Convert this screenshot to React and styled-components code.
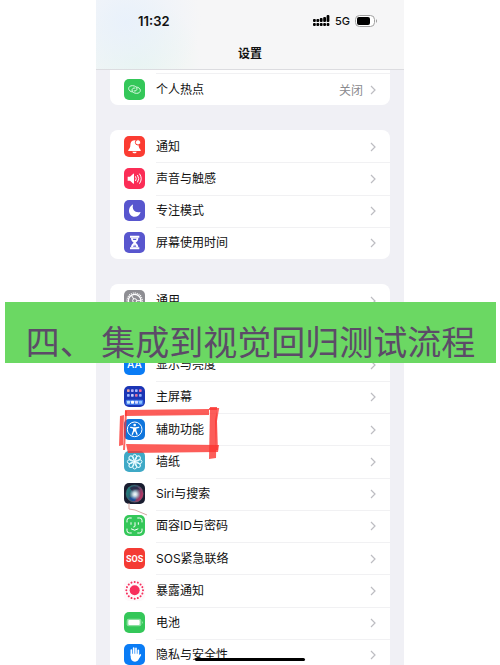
import styled, { createGlobalStyle } from "styled-components";

const GlobalStyle = createGlobalStyle`
  * {
    box-sizing: border-box;
  }

  body {
    margin: 0;
    background: #ffffff;
    color: #111111;
    font-family: Inter, "Noto Sans CJK SC", sans-serif;
  }
`;

const Page = styled.div`
  position: relative;
  height: 100vh;
  padding: 0 96px;
  overflow: hidden;
`;

const Phone = styled.div`
  display: flex;
  flex-direction: column;
  background: #f0f0f5;
`;

const Header = styled.header`
  height: 70px;
  border-bottom: 1px solid #dcdce0;
  background:
    radial-gradient(circle at 30px 22px, #e9f1fb 0, rgba(233, 241, 251, 0) 75px),
    radial-gradient(circle at 40px 62px, #e8f6ee 0, rgba(232, 246, 238, 0) 65px),
    #f6f6f7;
`;

const StatusBar = styled.div`
  display: flex;
  align-items: center;
  height: 42px;
  padding: 0 26px 0 42px;
`;

const Clock = styled.time`
  margin-right: auto;
  font-size: 13px;
  font-weight: 600;
`;

const Network = styled.span`
  margin: 0 5px;
  font-size: 11px;
  font-weight: 500;
`;

const Title = styled.h1`
  margin: 0;
  font-size: 12px;
  font-weight: 700;
  line-height: 24px;
  text-align: center;
`;

const Content = styled.main`
  display: flex;
  flex-direction: column;
  gap: 25px;
  padding: 0 14px;
`;

const Group = styled.ul`
  display: grid;
  grid-auto-rows: 1fr;
  min-height: ${({ $height }) => $height}px;
  margin: 0;
  padding: ${({ $continued }) => ($continued ? "3px 0 0" : "0")};
  border-radius: ${({ $continued }) => ($continued ? "0 0 8px 8px" : "8px")};
  background: #ffffff;
  list-style: none;
`;

const Item = styled.li`
  position: relative;
  display: flex;
`;

const RowButton = styled.button`
  display: flex;
  align-items: center;
  gap: 11px;
  width: 100%;
  padding: 0 0 0 14px;
  border: 0;
  background: none;
  color: inherit;
  font: inherit;
  font-size: 12px;
  text-align: left;
`;

const RowBody = styled.span`
  display: flex;
  flex: 1;
  align-items: center;
  gap: 7px;
  align-self: stretch;
  padding-right: 14px;
  border-top: 1px solid ${({ $divided }) => ($divided ? "#f1f1f3" : "transparent")};
`;

const Label = styled.span`
  flex: 1;
  line-height: 18px;
  white-space: nowrap;
`;

const Value = styled.span`
  color: #8a8a8e;
`;

const IconSvg = styled.svg`
  flex: none;
  width: 21px;
  height: 21px;
  border-radius: 5px;
  background: ${({ $color }) => $color};
`;

const Marker = styled.svg`
  position: absolute;
  z-index: 1;
  top: -7px;
  left: 8px;
  width: 104px;
  height: 54px;
  pointer-events: none;
`;

const Scribble = styled.svg`
  position: absolute;
  z-index: 1;
  top: 24px;
  left: 17px;
  width: 21px;
  height: 14px;
  pointer-events: none;
`;

const Banner = styled.div`
  position: absolute;
  z-index: 2;
  top: 302px;
  right: 4px;
  left: 5px;
  padding: 19px 0 2px;
  background: #6bd863;
  color: #5c4b68;
  font-family: "Noto Sans CJK SC", sans-serif;
  font-size: 34px;
  line-height: 40px;
  text-align: center;
  white-space: nowrap;
`;

const HomeIndicator = styled.div`
  position: absolute;
  z-index: 2;
  bottom: 4px;
  left: 50%;
  width: 110px;
  height: 3px;
  margin-left: -55px;
  border-radius: 2px;
  background: #000000;
`;

const around = (count) =>
  Array.from({ length: count }, (_, i) => (i * 360) / count);

const ICONS = {
  hotspot: {
    color: "#34c759",
    art: (
      <g fill="none" stroke="#d9f8e1" strokeWidth="3" strokeLinecap="round">
        <path d="M25 39c-6-1-11-5-11-10 0-6 5-9 11-9 8 0 14 4 14 10 0 4-4 7-9 6" />
        <path d="M38 24c6 1 11 5 11 10 0 6-5 9-11 9-8 0-14-4-14-10 0-4 4-7 9-6" />
      </g>
    ),
  },
  bell: {
    color: "#fb3c32",
    art: (
      <>
        <path
          fill="#fff"
          d="M31 13c-9 1-12 7-12 15 0 8-3 10-6 14-1 2 0 3 2 3h33c2 0 3-1 2-3-3-4-6-6-6-14 0-8-3-14-13-15zM25 47h13c-1 4-3 5-6 5s-6-1-7-5z"
        />
        <circle cx="42" cy="19" r="8" fill="#fff" stroke="#fb3c32" strokeWidth="3" />
      </>
    ),
  },
  sound: {
    color: "#fb2d56",
    art: (
      <>
        <path fill="#fff" d="M11 26h7l10-9c1-1 2 0 2 1v28c0 1-1 2-2 1l-10-9h-7z" />
        <path
          fill="none"
          stroke="#fff"
          strokeWidth="3"
          strokeLinecap="round"
          d="M35 26q4 6 0 12M41 22q7 10 0 20M47 18q10 14 0 28"
        />
      </>
    ),
  },
  moon: {
    color: "#5856ce",
    art: (
      <path
        fill="#fff"
        d="M25 14c1-1 2 0 2 1-4 14 7 24 21 21 1 0 2 0 1 2-3 8-9 12-17 12-10 0-17-8-17-18 0-8 4-14 10-18z"
      />
    ),
  },
  hourglass: {
    color: "#5856ce",
    art: (
      <>
        <path fill="#fff" d="M18 11h28v6H18zM18 46h28v6H18z" />
        <path
          fill="#fff"
          d="M21 17h22c0 8-3 11-8 15 5 4 8 7 8 14H21c0-7 3-10 8-14-5-4-8-7-8-15z"
        />
        <path fill="#5856ce" d="M26 20h12l-2 4h-8zM32 36l5 8H27z" />
        <path stroke="#fff" strokeWidth="3" d="M32 30v11" />
      </>
    ),
  },
  gear: {
    color: "#8e8e93",
    art: (
      <g fill="none" stroke="#fff">
        <circle cx="32" cy="32" r="19" strokeWidth="4" />
        <circle cx="32" cy="32" r="23" strokeWidth="4" strokeDasharray="3 3" />
        <circle cx="32" cy="32" r="6" strokeWidth="3" />
        <path strokeWidth="3" d="M38 32h13M29 27l-7-12M29 37l-7 12" />
      </g>
    ),
  },
  control: {
    color: "#8e8e93",
    art: (
      <g fill="none" stroke="#fff" strokeWidth="4">
        <rect x="13" y="14" width="37" height="15" rx="7" />
        <rect x="13" y="35" width="37" height="15" rx="7" />
      </g>
    ),
  },
  display: {
    color: "#0a7cf5",
    art: (
      <text
        x="31"
        y="43"
        fill="#fff"
        fontSize="31"
        fontWeight="500"
        textAnchor="middle"
      >
        AA
      </text>
    ),
  },
  home: {
    color: "#1b35b5",
    art: (
      <>
        {["#e8a0a0", "#b3aef2", "#a8b7ff", "#f06c9c"].map((fill, i) => (
          <rect key={fill} x={9 + i * 12} y="10" width="8" height="8" rx="2" fill={fill} />
        ))}
        {["#9db8ff", "#c4ccff", "#e0719c", "#93b4ff"].map((fill, i) => (
          <rect key={fill} x={9 + i * 12} y="24" width="8" height="8" rx="2" fill={fill} />
        ))}
        <rect x="5" y="41" width="53" height="16" rx="4" fill="#3f76e8" />
        {["#bfe3ff", "#ffffff", "#d5d8ff", "#8ec5ff"].map((fill, i) => (
          <rect key={fill} x={9 + i * 12} y="44" width="9" height="9" rx="2" fill={fill} />
        ))}
      </>
    ),
  },
  accessibility: {
    color: "#0f75dc",
    art: (
      <>
        <circle cx="32" cy="31" r="22" fill="none" stroke="#fff" strokeWidth="3" />
        <circle cx="32" cy="18" r="4" fill="#fff" />
        <path
          fill="none"
          stroke="#fff"
          strokeWidth="4"
          strokeLinecap="round"
          strokeLinejoin="round"
          d="M20 25l9 2v8l-4 11M44 25l-9 2v8l4 11M29 27h6M32 27v9"
        />
      </>
    ),
  },
  wallpaper: {
    color: "#3fa9c6",
    art: (
      <g fill="none" stroke="#e6faff" strokeWidth="3">
        {around(8).map((angle) => (
          <ellipse
            key={angle}
            cx="32"
            cy="18"
            rx="6"
            ry="8"
            transform={`rotate(${angle} 32 32)`}
          />
        ))}
        <circle cx="32" cy="32" r="4" fill="#fff" />
      </g>
    ),
  },
  siri: {
    color: "#191d30",
    art: (
      <>
        <defs>
          <radialGradient id="siriGlow" cx="0.5" cy="0.5" r="0.5">
            <stop offset="0" stopColor="#ffffff" />
            <stop offset="0.35" stopColor="#d3e4ec" stopOpacity="0.9" />
            <stop offset="1" stopColor="#a9cbd8" stopOpacity="0" />
          </radialGradient>
          <linearGradient id="siriOrb" x1="0" y1="0.2" x2="1" y2="0.6">
            <stop offset="0" stopColor="#17897f" />
            <stop offset="0.5" stopColor="#3b5470" />
            <stop offset="1" stopColor="#c92f62" />
          </linearGradient>
        </defs>
        <circle cx="32" cy="32" r="26" fill="url(#siriOrb)" />
        <path fill="#2b2644" fillOpacity="0.8" d="M17 15q17-12 32 5-16-5-23 6z" />
        <path fill="#1d4f9a" d="M14 44q14 0 19-11 5 14 0 21-12 1-19-10z" />
        <circle cx="33" cy="34" r="17" fill="url(#siriGlow)" />
        <circle cx="32" cy="32" r="26" fill="none" stroke="#5f8a8c" strokeWidth="1" />
      </>
    ),
  },
  face: {
    color: "#34c759",
    art: (
      <g fill="none" stroke="#fff" strokeWidth="3" strokeLinecap="round">
        <path d="M9 21v-5q0-7 7-7h6M41 9h6q7 0 7 7v5M54 42v5q0 7-7 7h-6M22 54h-6q-7 0-7-7v-5" />
        <path d="M21 23v5M43 23v5M33 23v10q0 3-4 3M22 42q10 8 20 0" />
      </g>
    ),
  },
  sos: {
    color: "#f43b34",
    art: (
      <text
        x="32"
        y="41"
        fill="#fff"
        fontFamily="Roboto, sans-serif"
        fontSize="27"
        fontWeight="700"
        textAnchor="middle"
      >
        SOS
      </text>
    ),
  },
  exposure: {
    color: "#fdf9fb",
    art: (
      <g fill="#f72f5d">
        <circle cx="32" cy="31" r="15" />
        {around(16).map((angle) => (
          <circle
            key={angle}
            cx="32"
            cy="6"
            r="3"
            transform={`rotate(${angle} 32 31)`}
          />
        ))}
      </g>
    ),
  },
  battery: {
    color: "#34c759",
    art: (
      <>
        <rect x="8" y="20" width="44" height="23" rx="6" fill="#8be0a0" />
        <rect x="13" y="24" width="34" height="15" rx="3" fill="#fff" />
        <path fill="#a5e8b5" d="M54 27q5 4 0 9z" />
      </>
    ),
  },
  privacy: {
    color: "#0a7cf5",
    art: (
      <>
        <path
          fill="none"
          stroke="#fff"
          strokeWidth="5"
          strokeLinecap="round"
          d="M22 34V18M29 32V12M36 32V13M43 34V19M43 42l6-9"
        />
        <path fill="#fff" d="M20 29h25l1 10c-1 9-6 14-13 14-9 0-13-6-13-14z" />
      </>
    ),
  },
};

const SECTIONS = [
  {
    height: 35,
    continued: true,
    rows: [{ icon: "hotspot", label: "个人热点", value: "关闭" }],
  },
  {
    height: 129,
    rows: [
      { icon: "bell", label: "通知" },
      { icon: "sound", label: "声音与触感" },
      { icon: "moon", label: "专注模式" },
      { icon: "hourglass", label: "屏幕使用时间" },
    ],
  },
  {
    height: 387,
    rows: [
      { icon: "gear", label: "通用" },
      // fully covered by the banner, so it carries no label
      { icon: "control", label: "" },
      { icon: "display", label: "显示与亮度" },
      { icon: "home", label: "主屏幕" },
      { icon: "accessibility", label: "辅助功能", marked: true },
      { icon: "wallpaper", label: "墙纸" },
      { icon: "siri", label: "Siri与搜索", scribbled: true },
      { icon: "face", label: "面容ID与密码" },
      { icon: "sos", label: "SOS紧急联络" },
      { icon: "exposure", label: "暴露通知" },
      { icon: "battery", label: "电池" },
      { icon: "privacy", label: "隐私与安全性" },
    ],
  },
];

const AppIcon = ({ name }) => (
  <IconSvg viewBox="0 0 63 63" $color={ICONS[name].color} aria-hidden="true">
    {ICONS[name].art}
  </IconSvg>
);

const Chevron = () => (
  <svg width="6" height="10" viewBox="0 0 6 10" aria-hidden="true">
    <path d="M1 1l4 4-4 4" fill="none" stroke="#bdbdc2" strokeWidth="1.2" />
  </svg>
);

// two SIMs: bars on top, dots below
const Signal = () => (
  <svg width="17" height="12" viewBox="0 0 17 12" aria-hidden="true">
    {[4, 4, 3, 2, 0].map((top, i) => (
      <g key={i}>
        <rect x={i * 3.4} y={top} width="2.8" height={7 - top} rx="1" />
        <rect x={i * 3.4} y="8" width="2.8" height="3" rx="1" />
      </g>
    ))}
  </svg>
);

const Battery = () => (
  <svg width="23" height="12" viewBox="0 0 23 12" aria-hidden="true">
    <rect x="0.5" y="0.5" width="19" height="11" rx="4" fill="#fff" stroke="#a0a0a0" />
    <rect x="2" y="2" width="13" height="8" rx="2" />
    <path d="M21 4q2 2 0 4z" fill="#999" />
  </svg>
);

// hand drawn red box round one row
const RedBox = () => (
  <Marker viewBox="0 0 104 54" aria-hidden="true">
    <g fill="#fb3430" fillOpacity="0.8">
      <path d="M7 4l84-1v6L7 10z" />
      <path d="M8 38l93 1-1 7-90 1z" />
      <path d="M92 1h7l-1 51-7 1z" />
      <path d="M2 10l4-1-1 30-4 1z" />
    </g>
    <g fill="none" stroke="#fb3430" strokeOpacity="0.75" strokeWidth="2">
      <path d="M8 5l-2 39M91 3h9l-2 12 1 29" />
    </g>
  </Marker>
);

const PenStroke = () => (
  <Scribble viewBox="0 0 21 14" aria-hidden="true">
    <path d="M2 1v6l6 1 12 5" fill="none" stroke="#d5a9a5" />
  </Scribble>
);

const SettingsRow = ({ row, divided }) => (
  <Item>
    <RowButton type="button">
      <AppIcon name={row.icon} />
      <RowBody $divided={divided}>
        <Label>{row.label}</Label>
        {row.value && <Value>{row.value}</Value>}
        <Chevron />
      </RowBody>
    </RowButton>
    {row.marked && <RedBox />}
    {row.scribbled && <PenStroke />}
  </Item>
);

const App = () => {
  return (
    <Page>
      <GlobalStyle />
      <Phone>
        <Header>
          <StatusBar>
            <Clock>11:32</Clock>
            <Signal />
            <Network>5G</Network>
            <Battery />
          </StatusBar>
          <Title>设置</Title>
        </Header>
        <Content>
          {SECTIONS.map((section) => (
            <Group
              key={section.rows[0].icon}
              $height={section.height}
              $continued={section.continued}
            >
              {section.rows.map((row, index) => (
                <SettingsRow
                  key={row.icon}
                  row={row}
                  divided={index > 0 || section.continued}
                />
              ))}
            </Group>
          ))}
        </Content>
      </Phone>
      <Banner>四、 集成到视觉回归测试流程</Banner>
      <HomeIndicator />
    </Page>
  );
};

export default App;
